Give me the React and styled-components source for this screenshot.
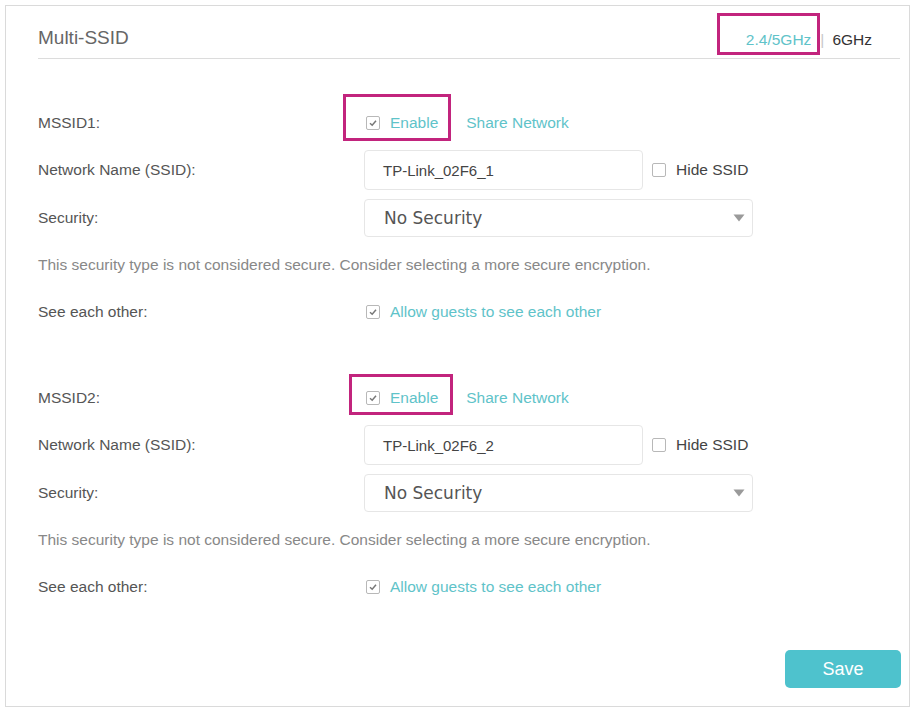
import React from 'react';
import styled, { createGlobalStyle } from 'styled-components';

const GlobalStyle = createGlobalStyle`
  * { box-sizing: border-box; }
  body {
    margin: 0;
    background: #fff;
    font-family: "Liberation Sans", Arial, sans-serif;
  }
`;

const TEAL = '#5fc3c9';
const PINK = '#c2247d';

// outer card holding the whole settings form
const Panel = styled.div`
  margin: 5px 0 0 5px;
  width: 905px;
  height: 702px;
  border: 1px solid #dadada;
  padding: 0 9px 0 32px;
  display: flex;
  flex-direction: column;
`;

const Header = styled.div`
  height: 53px;
  border-bottom: 1px solid #dcdcdc;
  display: flex;
  justify-content: space-between;
  align-items: flex-end;
  padding-bottom: 9px;
`;

const Title = styled.h2`
  margin: 0;
  font-size: 19px;
  line-height: 22px;
  font-weight: normal;
  color: #666;
`;

const Tabs = styled.div`
  display: flex;
  align-items: center;
  font-size: 15.5px;
  line-height: 18px;
  padding-right: 28px;
`;

const Tab = styled.span`
  color: ${p => (p.$active ? TEAL : '#333')};
`;

const Divider = styled.span`
  color: #c8c8c8;
  margin: 0 8px 0 9px;
`;

// pink annotation frame; negative margins keep it out of the flow
const Highlight = styled.span`
  display: inline-flex;
  align-items: center;
  border: 3px solid ${PINK};
  padding: ${p => `${p.$t}px ${p.$r}px ${p.$b}px ${p.$l}px`};
  margin: ${p => `-${p.$t + 3}px -${p.$r + 3}px -${p.$b + 3}px -${p.$l + 3}px`};
`;

const Section = styled.div`
  display: flex;
  flex-direction: column;
  margin-top: ${p => p.$top}px;
`;

const Row = styled.div`
  display: grid;
  grid-template-columns: 326px 1fr;
  align-items: center;
  height: ${p => p.$h}px;
`;

const Label = styled.div`
  font-size: 15.5px;
  color: #555;
`;

const Note = styled.div`
  font-size: 15.5px;
  color: #888;
  height: ${p => p.$h}px;
  display: flex;
  align-items: center;
`;

const Controls = styled.div`
  display: flex;
  align-items: center;
`;

const CheckWrap = styled.span`
  display: inline-flex;
  align-items: center;
  gap: 10px;
  margin-left: ${p => p.$ml || 0}px;
  font-size: 15.5px;
  line-height: 18px;
  color: ${p => p.$color || '#444'};
`;

const Box = styled.span`
  width: 14px;
  height: 14px;
  border: 1px solid #b8b8b8;
  border-radius: 2px;
  display: inline-flex;
  align-items: center;
  justify-content: center;
  background: #fff;
`;

const LinkText = styled.span`
  font-size: 15.5px;
  color: ${TEAL};
  margin-left: 28px;
`;

const TextField = styled.div`
  width: 279px;
  height: 40px;
  border: 1px solid #e6e6e6;
  border-radius: 4px;
  padding-left: 18px;
  display: flex;
  align-items: center;
  font-size: 15px;
  color: #444;
`;

const Select = styled.div`
  width: 389px;
  height: 38px;
  border: 1px solid #e6e6e6;
  border-radius: 4px;
  padding: 0 7px 0 19px;
  display: flex;
  align-items: center;
  justify-content: space-between;
  font-family: "DejaVu Sans", Verdana, sans-serif;
  font-size: 17px;
  color: #555;
`;

const Footer = styled.div`
  display: flex;
  justify-content: flex-end;
  margin-top: 39px;
`;

const SaveButton = styled.button`
  width: 116px;
  height: 38px;
  margin-right: -1px;
  border: none;
  border-radius: 5px;
  background: #4ec2cd;
  color: #fff;
  font-family: inherit;
  font-size: 18px;
`;

const Checkbox = ({ checked, label, color, ml }) => (
  <CheckWrap $color={color} $ml={ml}>
    <Box>
      {checked && (
        <svg width="10" height="10" viewBox="0 0 10 10">
          <path d="M2 5.2 L4.2 7.2 L8 2.8" fill="none" stroke="#777" strokeWidth="1.5" />
        </svg>
      )}
    </Box>
    {label}
  </CheckWrap>
);

const Arrow = () => (
  <svg width="12" height="8" viewBox="0 0 12 8">
    <path d="M0.5 0.5 H11.5 L6 7.5 Z" fill="#9a9a9a" />
  </svg>
);

const ssids = [
  { id: 1, name: 'TP-Link_02F6_1', top: 40, hl: { t: 17, r: 10, b: 6, l: 20 } },
  { id: 2, name: 'TP-Link_02F6_2', top: 38, hl: { t: 12, r: 12, b: 5, l: 14 } },
];

const App = () => (
  <>
    <GlobalStyle />
    <Panel>
      <Header>
        <Title>Multi-SSID</Title>
        <Tabs>
          <Highlight $t={15} $r={6} $b={3} $l={26}>
            <Tab $active>2.4/5GHz</Tab>
          </Highlight>
          <Divider>|</Divider>
          <Tab>6GHz</Tab>
        </Tabs>
      </Header>

      {ssids.map(s => (
        <Section key={s.id} $top={s.top}>
          <Row $h={47}>
            <Label>MSSID{s.id}:</Label>
            <Controls>
              <Highlight $t={s.hl.t} $r={s.hl.r} $b={s.hl.b} $l={s.hl.l} style={{ marginLeft: 2 - (s.hl.l + 3) }}>
                <Checkbox checked label="Enable" color={TEAL} />
              </Highlight>
              <LinkText>Share Network</LinkText>
            </Controls>
          </Row>
          <Row $h={48}>
            <Label>Network Name (SSID):</Label>
            <Controls>
              <TextField>{s.name}</TextField>
              <Checkbox label="Hide SSID" ml={9} />
            </Controls>
          </Row>
          <Row $h={48}>
            <Label>Security:</Label>
            <Controls>
              <Select>
                No Security
                <Arrow />
              </Select>
            </Controls>
          </Row>
          <Note $h={46}>
            This security type is not considered secure. Consider selecting a more secure encryption.
          </Note>
          <Row $h={48}>
            <Label>See each other:</Label>
            <Controls>
              <Checkbox checked label="Allow guests to see each other" color={TEAL} ml={2} />
            </Controls>
          </Row>
        </Section>
      ))}

      <Footer>
        <SaveButton>Save</SaveButton>
      </Footer>
    </Panel>
  </>
);

export default App;
